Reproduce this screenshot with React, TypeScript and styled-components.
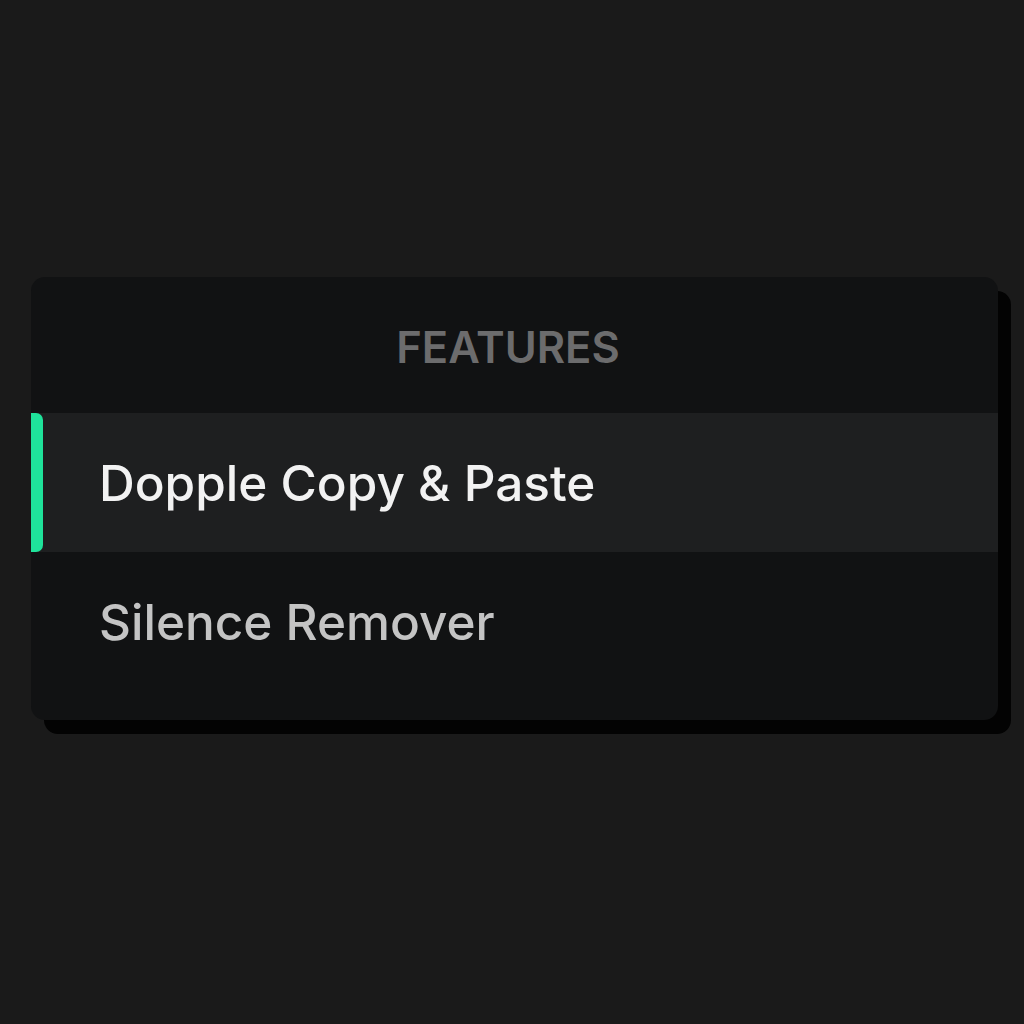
import React, { useState } from "react";
import styled, { createGlobalStyle } from "styled-components";

const GlobalStyle = createGlobalStyle`
  html, body {
    margin: 0;
    padding: 0;
    background: #1a1a1a;
  }
  body {
    font-family: Inter, "Noto Sans", "Liberation Sans", sans-serif;
  }
`;

const Page = styled.div`
  min-height: 1024px;
  padding: 277px 0 0 31px;
  box-sizing: border-box;
`;

const Card = styled.div`
  width: 967px;
  height: 443px;
  background: #111213;
  border-radius: 14px;
  box-shadow: 13px 14px 0 0 #030303;
  overflow: hidden;
  display: flex;
  flex-direction: column;
`;

const Header = styled.div`
  height: 136px;
  display: flex;
  align-items: center;
  justify-content: center;
  font-size: 43.5px;
  font-weight: 600;
  color: #6c6c6d;
  padding-right: 13px;
  padding-top: 4px;
  box-sizing: border-box;
`;

const Row = styled.div<{ active: boolean }>`
  position: relative;
  height: 139px;
  display: flex;
  align-items: center;
  padding-left: 68px;
  font-size: 49.5px;
  font-weight: 500;
  background: ${({ active }) => (active ? "#1e1f20" : "transparent")};
  color: ${({ active }) => (active ? "#f2f2f2" : "#c4c4c4")};
  cursor: pointer;
`;

const Marker = styled.span`
  position: absolute;
  left: 0;
  top: 0;
  bottom: 0;
  width: 12px;
  background: #1fe39b;
  border-radius: 0 7px 7px 0;
`;

const items = ["Dopple Copy & Paste", "Silence Remover"];

const App = () => {
  const [selected, setSelected] = useState(0);
  return (
    <>
      <GlobalStyle />
      <Page>
        <Card>
          <Header>FEATURES</Header>
          {items.map((label, i) => (
            <Row key={label} active={selected === i} onClick={() => setSelected(i)}>
              {selected === i && <Marker />}
              {label}
            </Row>
          ))}
        </Card>
      </Page>
    </>
  );
};

export default App;
